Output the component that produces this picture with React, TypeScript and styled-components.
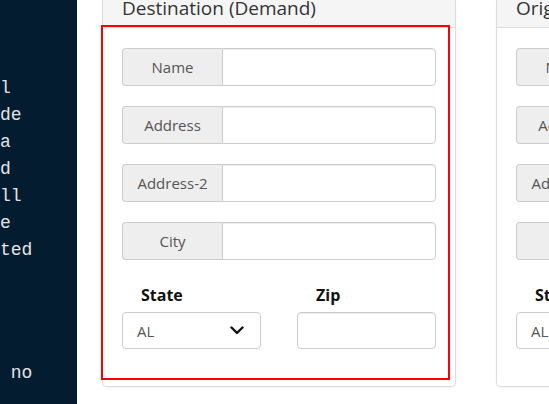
import * as React from "react";
import styled, { createGlobalStyle } from "styled-components";

const GlobalStyle = createGlobalStyle`
  html, body {
    margin: 0;
    padding: 0;
    background: #ffffff;
    overflow: hidden;
  }
`;

const Page = styled.div`
  display: flex;
  width: 549px;
  height: 404px;
  overflow: hidden;
  font-family: "Open Sans", "Noto Sans", sans-serif;
`;

const Console = styled.pre`
  flex: 0 0 77px;
  margin: 0;
  padding: 75px 0 0 0;
  background: #031c30;
  color: #e4e4e4;
  font-family: "Liberation Mono", "Courier New", monospace;
  font-size: 18px;
  line-height: 27px;
  white-space: pre;
  overflow: hidden;
`;

const ConsoleTail = styled.div`
  margin-top: 96px;
`;

const Cards = styled.div`
  display: flex;
  gap: 40px;
  padding-left: 25px;
  align-items: flex-start;
`;

const Card = styled.section`
  position: relative;
  flex: 0 0 354px;
  width: 354px;
  min-width: 0;
  height: 387px;
  box-sizing: border-box;
  border: 1px solid #dddddd;
  border-top: none;
  border-radius: 0 0 5px 5px;
  box-shadow: 0 1px 2px rgba(0, 0, 0, 0.06);
  background: #ffffff;
`;

const CardHeader = styled.header`
  height: 28px;
  box-sizing: border-box;
  border-bottom: 1px solid #dddddd;
  background: #f5f5f5;
  padding: 0 19px;
`;

const CardTitle = styled.h3`
  margin: 0;
  font-size: 19px;
  font-weight: 400;
  line-height: 16px;
  color: #333333;
  white-space: nowrap;
`;

const CardBody = styled.div`
  display: flex;
  flex-direction: column;
  gap: 20px;
  padding: 20px 19px 0 19px;
`;

const Highlight = styled.div`
  position: absolute;
  left: -2px;
  top: 25px;
  width: 349px;
  height: 355px;
  box-sizing: border-box;
  border: 2px solid #ff0000;
  pointer-events: none;
`;

const InputGroup = styled.div`
  display: flex;
  height: 38px;
`;

const Addon = styled.span`
  flex: 0 0 100px;
  box-sizing: border-box;
  display: flex;
  align-items: center;
  justify-content: center;
  background: #eeeeee;
  border: 1px solid #cccccc;
  border-right: none;
  border-radius: 4px 0 0 4px;
  color: #555555;
  font-size: 15px;
`;

const TextInput = styled.input<{ $grouped?: boolean }>`
  flex: 1;
  width: 0;
  min-width: 0;
  box-sizing: border-box;
  height: ${(p) => (p.$grouped ? "38px" : "37px")};
  border: 1px solid #cccccc;
  border-radius: ${(p) => (p.$grouped ? "0 4px 4px 0" : "4px")};
  box-shadow: inset 0 1px 1px rgba(0, 0, 0, 0.075);
  background: #ffffff;
  padding: 0 12px;
  font-family: inherit;
  font-size: 15px;
  outline: none;
`;

const ZipInput = styled(TextInput)`
  flex: none;
  width: 100%;
`;

const SplitRow = styled.div`
  display: grid;
  grid-template-columns: 139px 139px;
  justify-content: space-between;
  margin-top: 5px;
`;

const Field = styled.div`
  display: flex;
  flex-direction: column;
  gap: 7px;
`;

const FieldLabel = styled.label`
  padding-left: 19px;
  font-size: 16px;
  font-weight: 700;
  line-height: 20px;
  color: #111111;
`;

const Select = styled.div`
  display: flex;
  align-items: center;
  justify-content: space-between;
  box-sizing: border-box;
  height: 37px;
  padding: 0 16px 0 14px;
  border: 1px solid #cccccc;
  border-radius: 4px;
  background: #ffffff;
  color: #555555;
  font-size: 15px;
`;

const Chevron = () => (
  <svg width="14" height="9" viewBox="0 0 14 9">
    <path d="M1.5 1.5 L7 7 L12.5 1.5" fill="none" stroke="#111" strokeWidth="2.4" strokeLinecap="round" strokeLinejoin="round" />
  </svg>
);

const FIELDS = ["Name", "Address", "Address-2", "City"];

function AddressCard({ title, marked }: { title: string; marked?: boolean }) {
  return (
    <Card>
      <CardHeader>
        <CardTitle>{title}</CardTitle>
      </CardHeader>
      <CardBody>
        {FIELDS.map((f) => (
          <InputGroup key={f}>
            <Addon>{f}</Addon>
            <TextInput $grouped type="text" />
          </InputGroup>
        ))}
        <SplitRow>
          <Field>
            <FieldLabel>State</FieldLabel>
            <Select>
              <span>AL</span>
              <Chevron />
            </Select>
          </Field>
          <Field>
            <FieldLabel>Zip</FieldLabel>
            <ZipInput type="text" />
          </Field>
        </SplitRow>
      </CardBody>
      {marked && <Highlight />}
    </Card>
  );
}

export default function App() {
  return (
    <>
      <GlobalStyle />
      <Page>
        <Console>
          {"l\nde\na\nd\nll\ne\nted"}
          <ConsoleTail>{" no"}</ConsoleTail>
        </Console>
        <Cards>
          <AddressCard title="Destination (Demand)" marked />
          <AddressCard title="Origin (Supply)" />
        </Cards>
      </Page>
    </>
  );
}
